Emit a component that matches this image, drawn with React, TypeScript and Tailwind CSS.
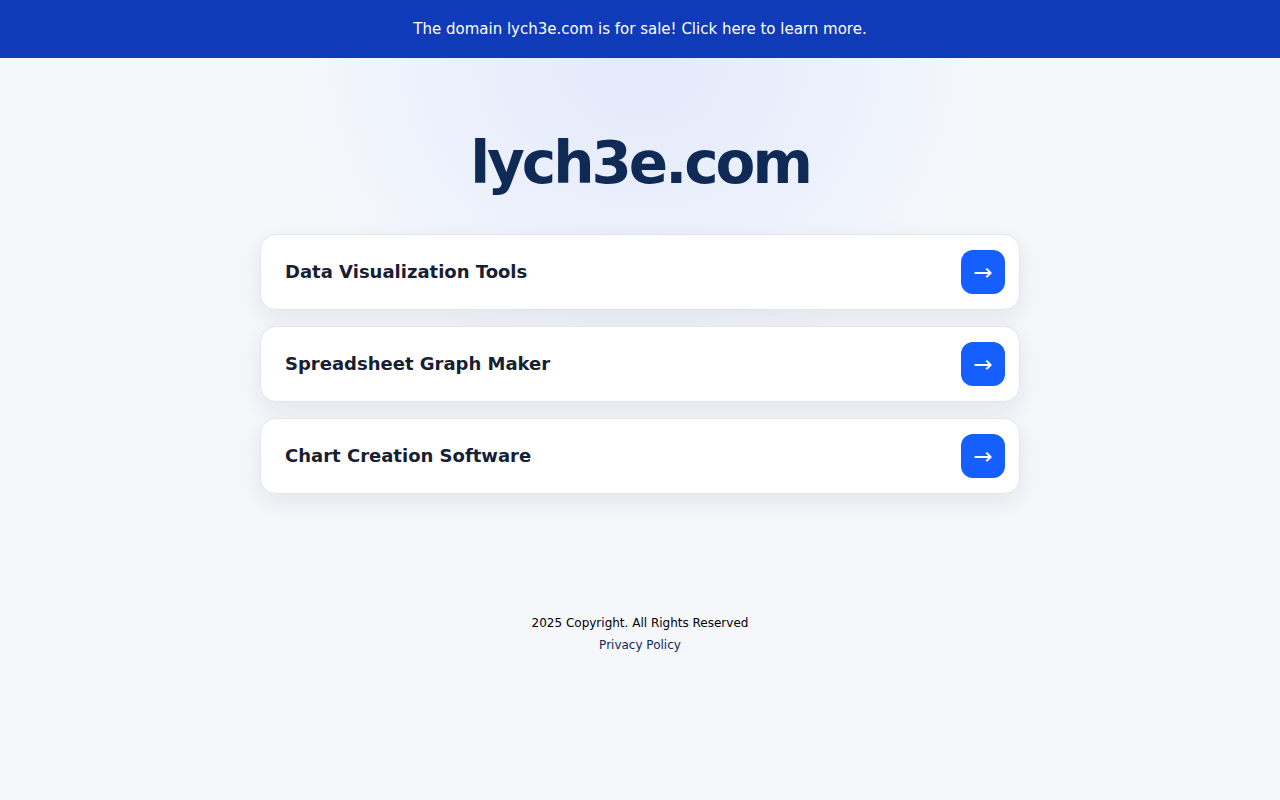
const links = [
  { label: 'Data Visualization Tools', href: '#data-visualization-tools' },
  { label: 'Spreadsheet Graph Maker', href: '#spreadsheet-graph-maker' },
  { label: 'Chart Creation Software', href: '#chart-creation-software' },
];

const SaleBanner = () => (
  <a
    href="#sale"
    className="block bg-[#0f3ab8] px-4 py-[17px] text-center text-[15px] leading-6 text-white"
  >
    The domain lych3e.com is for sale! Click here to learn more.
  </a>
);

const LinkCard = ({ label, href }: { label: string; href: string }) => (
  <a
    href={href}
    className="flex items-center justify-between rounded-2xl border border-[#e2e6ee] bg-white py-[15px] pr-3.5 pl-6 shadow-[0_8px_24px_rgba(15,23,42,0.08)]"
  >
    <span className="text-lg font-bold text-[#172033]">{label}</span>
    <span className="flex h-11 w-11 items-center justify-center rounded-xl bg-[#155eff] text-[23px] leading-normal text-white">
      →
    </span>
  </a>
);

const App = () => {
  return (
    <div className="min-h-screen bg-[#f5f7fb] font-['DejaVu_Sans',sans-serif]">
      <SaleBanner />

      <main className="bg-[radial-gradient(350px_320px_at_50%_0,#e3e9fa,#ecf1fc_60%,#f5f7fb)] px-5 pt-[69px]">
        <h1 className="text-center text-[58px] leading-[72px] font-bold tracking-[-3px] text-[#102a56]">
          lych3e.com
        </h1>

        <nav className="mx-auto mt-[35px] flex max-w-[760px] flex-col gap-4">
          {links.map((link) => (
            <LinkCard key={link.label} {...link} />
          ))}
        </nav>
      </main>

      <footer className="mt-[118px] text-center text-xs leading-[22px] text-black">
        <p>2025 Copyright. All Rights Reserved</p>
        <a href="#privacy" className="text-[#102a56]">
          Privacy Policy
        </a>
      </footer>
    </div>
  );
};

export default App;
